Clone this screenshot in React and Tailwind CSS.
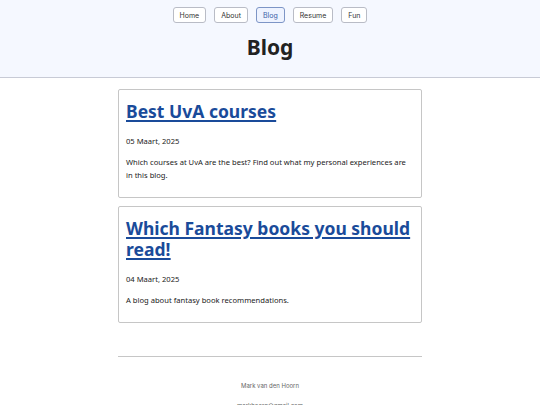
import React from 'react';

const NAV = ['Home', 'About', 'Blog', 'Resume', 'Fun'];

const POSTS = [
  {
    title: 'Best UvA courses',
    date: '05 Maart, 2025',
    text: 'Which courses at UvA are the best? Find out what my personal experiences are in this blog.',
  },
  {
    title: 'Which Fantasy books you should read!',
    date: '04 Maart, 2025',
    text: 'A blog about fantasy book recommendations.',
  },
];

const NavButton = ({ label, active }) => (
  <button
    className={`h-[16px] px-[6px] rounded-[3px] border text-[7px] leading-none font-['Inter',sans-serif] ${
      active
        ? 'border-[#7d95c6] bg-[#eef3ff] text-[#3b5ea8]'
        : 'border-[#b9bcc6] bg-white text-[#333]'
    }`}
  >
    {label}
  </button>
);

const PostCard = ({ title, date, text }) => (
  <div className="border border-[#c6c6c6] rounded-[2px] px-[7px] pt-[11px] pb-[15px] bg-white">
    <h2 className="text-[17.5px] leading-[21px] font-bold text-[#1a4b9a] underline underline-offset-[2px] decoration-[1.5px]">
      <a href="#">{title}</a>
    </h2>
    <p className="mt-[13px] text-[7.6px] leading-[12px] text-[#222]">{date}</p>
    <p className="mt-[9px] text-[7.6px] leading-[13px] text-[#222]">{text}</p>
  </div>
);

export default function App() {
  return (
    <div className="min-h-[405px] bg-white font-['Noto_Sans',sans-serif] text-[#222]">
      <header className="h-[78px] bg-[#f5f8ff] border-b border-[#c8cbd6] flex flex-col items-center pt-[7px]">
        <nav className="flex gap-[8px]">
          {NAV.map((n) => (
            <NavButton key={n} label={n} active={n === 'Blog'} />
          ))}
        </nav>
        <h1 className="mt-[10px] text-[21px] leading-[28px] font-bold text-[#222]">Blog</h1>
      </header>
      <main className="w-[304px] mx-auto pt-[11px] flex flex-col gap-[8px]">
        {POSTS.map((p) => (
          <PostCard key={p.title} {...p} />
        ))}
      </main>
      <footer className="w-[304px] mx-auto mt-[33px] border-t border-[#c6c6c6] pt-[24px] flex flex-col items-center gap-[11px] font-['Inter',sans-serif] text-[6px] text-[#666]">
        <p>Mark van den Hoorn</p>
        <p>markhoorn@gmail.com</p>
      </footer>
    </div>
  );
}
